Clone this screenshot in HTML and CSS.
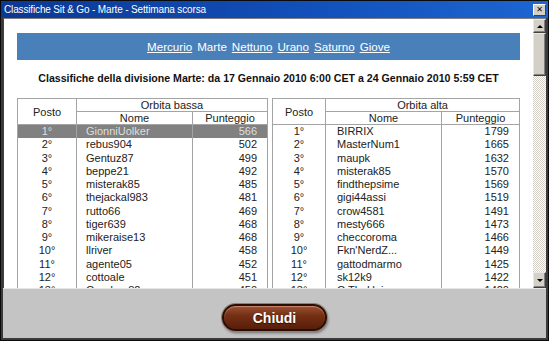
FILE: index.html
```html
<!DOCTYPE html>
<html lang="it">
<head>
    <meta charset="UTF-8">
    <title>Classifiche Sit &amp; Go - Marte - Settimana scorsa</title>
    <link rel="stylesheet" href="styles.css">
</head>
<body>
    <div class="window">
        <!-- Title bar -->
        <div class="titlebar">
            <span class="title">Classifiche Sit &amp; Go - Marte - Settimana scorsa</span>
            <span class="title-close">&#x2715;</span>
        </div>

        <!-- Scrollable area -->
        <div class="client">
            <div class="content">
                <nav class="planets">
                    <a href="#">Mercurio</a>
                    <span class="current">Marte</span>
                    <a href="#">Nettuno</a>
                    <a href="#">Urano</a>
                    <a href="#">Saturno</a>
                    <a href="#">Giove</a>
                </nav>

                <h1 class="heading">Classifiche della divisione Marte: da 17 Gennaio 2010 6:00 CET a 24 Gennaio 2010 5:59 CET</h1>

                <div class="boards">
                    <table class="board board-low">
                        <colgroup>
                            <col class="c-pos">
                            <col class="c-name">
                            <col>
                        </colgroup>
                        <thead>
                            <tr>
                                <th rowspan="2">Posto</th>
                                <th colspan="2">Orbita bassa</th>
                            </tr>
                            <tr>
                                <th>Nome</th>
                                <th>Punteggio</th>
                            </tr>
                        </thead>
                        <tbody>
                            <tr class="me"><td>1°</td><td>GionniUolker</td><td>566</td></tr>
                            <tr><td>2°</td><td>rebus904</td><td>502</td></tr>
                            <tr><td>3°</td><td>Gentuz87</td><td>499</td></tr>
                            <tr><td>4°</td><td>beppe21</td><td>492</td></tr>
                            <tr><td>5°</td><td>misterak85</td><td>485</td></tr>
                            <tr><td>6°</td><td>thejackal983</td><td>481</td></tr>
                            <tr><td>7°</td><td>rutto66</td><td>469</td></tr>
                            <tr><td>8°</td><td>tiger639</td><td>468</td></tr>
                            <tr><td>9°</td><td>mikeraise13</td><td>468</td></tr>
                            <tr><td>10°</td><td>llriver</td><td>458</td></tr>
                            <tr><td>11°</td><td>agente05</td><td>452</td></tr>
                            <tr><td>12°</td><td>cottoale</td><td>451</td></tr>
                            <tr><td>13°</td><td>Gandorx82</td><td>450</td></tr>
                        </tbody>
                    </table>

                    <table class="board board-high">
                        <colgroup>
                            <col class="c-pos">
                            <col class="c-name">
                            <col>
                        </colgroup>
                        <thead>
                            <tr>
                                <th rowspan="2">Posto</th>
                                <th colspan="2">Orbita alta</th>
                            </tr>
                            <tr>
                                <th>Nome</th>
                                <th>Punteggio</th>
                            </tr>
                        </thead>
                        <tbody>
                            <tr><td>1°</td><td>BIRRIX</td><td>1799</td></tr>
                            <tr><td>2°</td><td>MasterNum1</td><td>1665</td></tr>
                            <tr><td>3°</td><td>maupk</td><td>1632</td></tr>
                            <tr><td>4°</td><td>misterak85</td><td>1570</td></tr>
                            <tr><td>5°</td><td>findthepsime</td><td>1569</td></tr>
                            <tr><td>6°</td><td>gigi44assi</td><td>1519</td></tr>
                            <tr><td>7°</td><td>crow4581</td><td>1491</td></tr>
                            <tr><td>8°</td><td>mesty666</td><td>1473</td></tr>
                            <tr><td>9°</td><td>checcoroma</td><td>1466</td></tr>
                            <tr><td>10°</td><td>Fkn'NerdZ...</td><td>1449</td></tr>
                            <tr><td>11°</td><td>gattodmarmo</td><td>1425</td></tr>
                            <tr><td>12°</td><td>sk12k9</td><td>1422</td></tr>
                            <tr><td>13°</td><td>C.TheUnicorn</td><td>1420</td></tr>
                        </tbody>
                    </table>
                </div>
            </div>

            <!-- Classic scrollbar -->
            <div class="scrollbar">
                <div class="sb-btn"><span class="arrow-up"></span></div>
                <div class="sb-thumb"></div>
                <div class="sb-track"></div>
                <div class="sb-btn sb-btn-down"><span class="arrow-down"></span></div>
            </div>
        </div>

        <!-- Footer -->
        <div class="footer">
            <button class="close-btn">Chiudi</button>
        </div>
    </div>
</body>
</html>
```

FILE: styles.css
```css
* {
    margin: 0;
    padding: 0;
    box-sizing: border-box;
}

body {
    width: 549px;
    height: 341px;
    overflow: hidden;
    font-family: "Liberation Sans", Arial, sans-serif;
    background: #000;
}

/* Window frame */
.window {
    height: 341px;
    display: flex;
    flex-direction: column;
    border: 1px solid #0a0a0a;
    padding: 0 2px 2px 2px;
    background: #3a3a3a;
}

/* Title bar */
.titlebar {
    height: 17px;
    margin: 0 -2px;
    padding: 0 2px 0 3px;
    display: flex;
    align-items: center;
    background: linear-gradient(90deg, #0b3893 0%, #124fb8 55%, #1d66d2 100%);
}

.title {
    color: #ffffff;
    font-size: 10px;
    letter-spacing: -0.15px;
}

.title-close {
    margin-left: auto;
    width: 13px;
    height: 12px;
    display: flex;
    align-items: center;
    justify-content: center;
    background: #d4d0c8;
    border: 1px solid;
    border-color: #ffffff #404040 #404040 #ffffff;
    font-size: 8px;
    font-weight: bold;
    color: #000;
    font-family: "DejaVu Sans", sans-serif;
}

/* Client area */
.client {
    flex: 1;
    display: flex;
    min-height: 0;
    border-top: 1px solid #808080;
    border-left: 1px solid #404040;
}

.content {
    flex: 1;
    background: #ffffff;
    padding: 14px 13px 0 13px;
    overflow: hidden;
}

/* Planet links */
.planets {
    height: 27px;
    display: flex;
    justify-content: center;
    align-items: center;
    gap: 5px;
    background: #4a80b9;
    font-size: 11.6px;
    color: #ffffff;
}

.planets a {
    color: #ffffff;
    text-decoration: underline;
}

.heading {
    margin: 11px 0 13px;
    font-size: 10.6px;
    line-height: 14px;
    font-weight: bold;
    text-align: center;
    color: #111111;
}

/* Ranking tables */
.boards {
    display: grid;
    grid-template-columns: 251px 248px;
    gap: 4px;
    align-items: start;
}

.board {
    width: 100%;
    border-collapse: collapse;
    table-layout: fixed;
    font-size: 11px;
    color: #222222;
    border: 1px solid #a4a4a4;
}

.board-low .c-pos { width: 59px; }
.board-low .c-name { width: 116px; }
.board-high .c-pos { width: 53px; }
.board-high .c-name { width: 116px; }

.board th {
    height: 13px;
    line-height: 12px;
    font-weight: normal;
    border: 1px solid #a4a4a4;
    padding: 0;
}

.board td {
    height: 13.25px;
    line-height: 13.25px;
    padding: 0;
    border-left: 1px solid #a4a4a4;
    border-right: 1px solid #a4a4a4;
    white-space: nowrap;
    overflow: hidden;
}

.board td:first-child {
    text-align: center;
}

.board td:nth-child(2) {
    padding-left: 9px;
}

.board td:nth-child(3) {
    text-align: right;
    padding-right: 10px;
}

.board-high td:nth-child(2) {
    padding-left: 11px;
}

.board tr.me td {
    background: #818181;
    color: #dedede;
}

/* Scrollbar */
.scrollbar {
    width: 13px;
    display: flex;
    flex-direction: column;
    background: repeating-conic-gradient(#ffffff 0 25%, #d4d0c8 0 50%) 0 0 / 2px 2px;
}

.sb-btn,
.sb-thumb {
    background: #d4d0c8;
    border: 1px solid;
    border-color: #e8e8e8 #404040 #404040 #e8e8e8;
    box-shadow: inset -1px -1px #808080;
}

.sb-btn {
    height: 14px;
    display: flex;
    align-items: center;
    justify-content: center;
}

.sb-btn-down {
    height: 16px;
}

.sb-thumb {
    height: 43px;
}

.sb-track {
    flex: 1;
}

.arrow-up {
    width: 0;
    height: 0;
    border-left: 3px solid transparent;
    border-right: 3px solid transparent;
    border-bottom: 3px solid #000;
}

.arrow-down {
    width: 0;
    height: 0;
    border-left: 3px solid transparent;
    border-right: 3px solid transparent;
    border-top: 3px solid #000;
}

/* Footer */
.footer {
    height: 50px;
    flex-shrink: 0;
    display: flex;
    justify-content: center;
    align-items: flex-start;
    padding-top: 15px;
    background: #c4c4c4;
    border-top: 1px solid #e6e6e6;
}

.close-btn {
    width: 105px;
    height: 27px;
    border-radius: 14px;
    border: 2px solid #2b0d03;
    background: linear-gradient(#9a5236 0%, #763014 40%, #571e0a 100%);
    box-shadow: 0 0 0 1px #8f8079, inset 0 1px 1px rgba(255, 205, 180, 0.45), 1px 2px 3px rgba(0, 0, 0, 0.45);
    color: #ffffff;
    font-family: "Liberation Sans", Arial, sans-serif;
    font-size: 14px;
    font-weight: bold;
    text-shadow: 0 1px 1px #2b0d03;
    cursor: pointer;
}
```
